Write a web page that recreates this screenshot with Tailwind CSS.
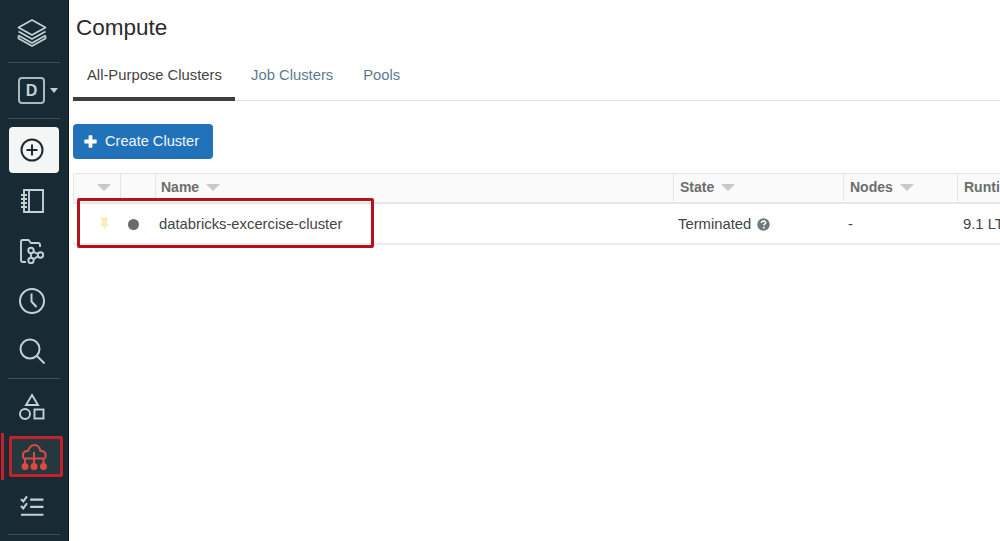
<!DOCTYPE html>
<html lang="en">
<head>
<meta charset="UTF-8">
<title>Compute</title>
<script src="https://cdn.jsdelivr.net/npm/@tailwindcss/browser@4"></script>
</head>
<body class="w-[1000px] h-[541px] overflow-hidden bg-white font-['Liberation_Sans',Arial,sans-serif] text-[14.8px] text-[#333]">
<div class="relative flex h-[541px]">
    <!-- sidebar -->
    <nav class="relative flex flex-col w-[68px] shrink-0 h-full bg-[#182b34] text-[#c4d0d4]">
        <div class="h-[62px] flex items-center justify-center pt-[4px] pr-[4px]">
            <svg width="30" height="30" viewBox="0 0 30 30" fill="none" stroke="currentColor" stroke-width="1.7" stroke-linejoin="round"><path d="M15 2 L28.5 9.5 L15 17 L1.5 9.5 Z"/><path d="M1.5 13.5 L15 21 L28.5 13.5"/><path d="M1.5 17.5 L15 25 L28.5 17.5 M1.5 17.5 V20.5 L15 28 L28.5 20.5 V17.5"/></svg>
        </div>
        <div class="mx-[8px] h-px bg-[#3d525c]"></div>
        <div class="h-[55px] flex items-center pl-[18px] gap-[5px]">
            <div class="w-[27px] h-[27px] border-2 border-[#a9babf] rounded-[4px] flex items-center justify-center text-[16px] font-bold text-[#c4d0d4]">D</div>
            <div class="w-0 h-0 border-x-[4.5px] border-x-transparent border-t-[5px] border-t-[#c4d0d4]"></div>
        </div>
        <div class="mx-[8px] h-px bg-[#3d525c]"></div>
        <div class="mt-[8px] ml-[9px] pr-[4px] w-[50px] h-[46px] bg-[#f4f5f5] rounded-[4px] flex items-center justify-center text-[#1b2b33]">
            <svg width="26" height="26" viewBox="0 0 26 26" fill="none" stroke="currentColor" stroke-width="2"><circle cx="13" cy="13" r="10.5"/><path d="M13 7.5 V18.5 M7.5 13 H18.5"/></svg>
        </div>
        <div class="h-[53px] mt-[1px] flex items-center justify-center pr-[4px]">
            <svg width="26" height="26" viewBox="0 0 26 26" fill="none" stroke="currentColor" stroke-width="1.9"><path d="M5 2 H24 V24 H5 Z"/><path d="M10 2 V24"/><path d="M2 7 H8 M2 11 H8 M2 15 H8 M2 19 H8"/></svg>
        </div>
        <div class="h-[48px] flex items-center justify-center pr-[4px]">
            <svg width="26" height="26" viewBox="0 0 26 26" fill="none" stroke="currentColor" stroke-width="1.9"><path d="M7 24 H4 Q2 24 2 22 V3.5 Q2 2 3.5 2 H9.5 L12 5 H19 Q21 5 21 7 V9"/><circle cx="12" cy="12.5" r="2.7"/><circle cx="12" cy="22.5" r="2.7"/><circle cx="21.5" cy="17" r="2.7"/><path d="M12 15 V20 M14.4 13.8 L19 15.8 M14.4 21.2 L19 18.4"/></svg>
        </div>
        <div class="h-[52px] flex items-center justify-center pr-[4px]">
            <svg width="28" height="28" viewBox="0 0 28 28" fill="none" stroke="currentColor" stroke-width="2"><circle cx="14" cy="14" r="12"/><path d="M13.5 6.5 V14.5 L18.5 20"/></svg>
        </div>
        <div class="h-[51px] flex items-center justify-center pr-[4px] pb-[4px]">
            <svg width="28" height="28" viewBox="0 0 28 28" fill="none" stroke="currentColor" stroke-width="2"><circle cx="12" cy="12" r="9.5"/><path d="M19 19 L26.5 26.5"/></svg>
        </div>
        <div class="mx-[8px] h-px bg-[#3d525c]"></div>
        <div class="h-[57px] flex items-center justify-center pr-[4px] pb-[2px]">
            <svg width="28" height="28" viewBox="0 0 28 28" fill="none" stroke="currentColor" stroke-width="1.9"><path d="M14 2 L20 12 H8 Z"/><circle cx="7" cy="21" r="5"/><rect x="16.5" y="16.5" width="9" height="9"/></svg>
        </div>
        <div class="relative ml-[9px] pr-[4px] w-[54px] h-[41px] bg-[#24393f] border-[3px] border-[#c4212a] rounded-[2px] flex items-center justify-center text-[#dc4a42]">
            <svg width="28" height="28" viewBox="0 0 28 28" fill="none" stroke="currentColor" stroke-width="2"><path d="M4 16 Q2.5 14 3 11 Q4 7.5 8 8 Q10 2 14.5 2 Q19 2 20.5 8 Q24.5 7.5 25.5 11 Q26 14 24.5 16"/><path d="M14 9 V21 M5 21 V15.5 H23.5 V21"/><circle cx="5" cy="23.5" r="2.5" fill="currentColor"/><circle cx="14" cy="23.5" r="2.5" fill="currentColor"/><circle cx="23.5" cy="23.5" r="2.5" fill="currentColor"/></svg>
        </div>
        <div class="absolute left-[1px] top-[433px] w-[3px] h-[47px] bg-[#c4212a]"></div>
        <div class="h-[57px] flex items-center justify-center pr-[4px]">
            <svg width="24" height="22" viewBox="0 0 26 24" fill="none" stroke="currentColor" stroke-width="2.3"><path d="M1 4.5 L3.5 7 L7.5 1.5 M1 12 L3.5 14.5 L7.5 9"/><path d="M11 5 H25.5 M11 13 H25.5 M1 21.5 H25.5"/></svg>
        </div>
        <div class="mx-[8px] h-px bg-[#3d525c]"></div>
    </nav>
    <div class="w-[1px] h-full bg-[#0f1a20] shrink-0"></div>

    <!-- main -->
    <main class="flex-1 min-w-0 overflow-hidden pl-[4px]">
        <h1 class="h-[57px] pt-[13px] pl-[3px] text-[22.5px] leading-[30px] text-[#2b2b2b]">Compute</h1>
        <div class="flex h-[44px] border-b border-[#dfe1e2] w-[1000px] items-stretch">
            <div class="w-[162px] -mb-px border-b-4 border-[#3f3f3f] pl-[14px] pt-[9px] leading-[18px] text-[#444]">All-Purpose Clusters</div>
            <div class="pl-[16px] pt-[9px] leading-[18px] text-[#5b7b8e]">Job Clusters</div>
            <div class="pl-[30px] pt-[9px] leading-[18px] text-[#5b7b8e]">Pools</div>
        </div>
        <button class="mt-[23px] flex items-center gap-[8px] w-[140px] h-[35px] pl-[11px] bg-[#2272b9] rounded-[4px] text-[14.6px] text-[#f2f7fb]">
            <svg width="13" height="13" viewBox="0 0 13 13" fill="#fff"><path d="M4.6 1 Q4.6 0.3 5.3 0.3 H7.7 Q8.4 0.3 8.4 1 V4.6 H12 Q12.7 4.6 12.7 5.3 V7.7 Q12.7 8.4 12 8.4 H8.4 V12 Q8.4 12.7 7.7 12.7 H5.3 Q4.6 12.7 4.6 12 V8.4 H1 Q0.3 8.4 0.3 7.7 V5.3 Q0.3 4.6 1 4.6 H4.6 Z"/></svg>
            Create Cluster
        </button>
        <div class="mt-[14px] w-[1000px]">
            <div class="flex h-[31px] pb-[1px] bg-[#fafafa] border-y border-l border-[#e6e6e6] border-b-2 text-[14px] font-bold text-[#6d6d6d]">
                <div class="w-[47px] border-r border-[#e6e6e6] flex items-center justify-center pl-[16px] pr-[2px]"><div class="w-0 h-0 border-x-[7px] border-x-transparent border-t-[7px] border-t-[#c9c9c9]"></div></div>
                <div class="w-[35px] border-r border-[#e6e6e6]"></div>
                <div class="w-[518px] border-r border-[#e6e6e6] flex items-center gap-[7px] pl-[5px]">Name <div class="w-0 h-0 border-x-[7px] border-x-transparent border-t-[7px] border-t-[#c9c9c9]"></div></div>
                <div class="w-[170px] border-r border-[#e6e6e6] flex items-center gap-[7px] pl-[6px]">State <div class="w-0 h-0 border-x-[7px] border-x-transparent border-t-[7px] border-t-[#c9c9c9]"></div></div>
                <div class="w-[114px] border-r border-[#e6e6e6] flex items-center gap-[7px] pl-[6px]">Nodes <div class="w-0 h-0 border-x-[7px] border-x-transparent border-t-[7px] border-t-[#c9c9c9]"></div></div>
                <div class="flex-1 flex items-center pl-[6px]">Runtime</div>
            </div>
            <div class="flex h-[41px] pt-[1px] items-center border-b-2 border-[#ececec] text-[#444]">
                <div class="w-[47px] flex justify-center pl-[16px]">
                    <svg width="11" height="14" viewBox="0 0 11 14" fill="#f8efb8"><path d="M2 0.5 H9 V2.5 L8 3 V6.5 L10.5 9 H6.5 L5.5 13.5 L4.5 9 H0.5 L3 6.5 V3 L2 2.5 Z"/></svg>
                </div>
                <div class="w-[35px] pl-[8px]"><div class="w-[11px] h-[11px] rounded-full bg-[#6b6b6b]"></div></div>
                <div class="w-[518px] pl-[4px]">databricks-excercise-cluster</div>
                <div class="w-[170px] pl-[5px] flex items-center gap-[6px]">Terminated
                    <svg width="13" height="13" viewBox="0 0 13 13"><circle cx="6.5" cy="6.5" r="6.2" fill="#6e7a7d"/><path d="M4.4 5 Q4.6 3 6.6 3 Q8.6 3.1 8.6 4.8 Q8.6 5.8 7.4 6.4 Q6.8 6.8 6.8 7.6" fill="none" stroke="#fff" stroke-width="1.5"/><rect x="5.9" y="8.8" width="1.7" height="1.7" fill="#fff"/></svg>
                </div>
                <div class="w-[114px] pl-[5px]">-</div>
                <div class="flex-1 pl-[6px]">9.1 LTS</div>
            </div>
        </div>
    </main>

    <!-- annotation over the row -->
    <div class="absolute left-[77px] top-[198px] w-[297px] h-[50px] border-[3px] border-[#b5121b] rounded-[2px]"></div>
</div>
</body>
</html>
